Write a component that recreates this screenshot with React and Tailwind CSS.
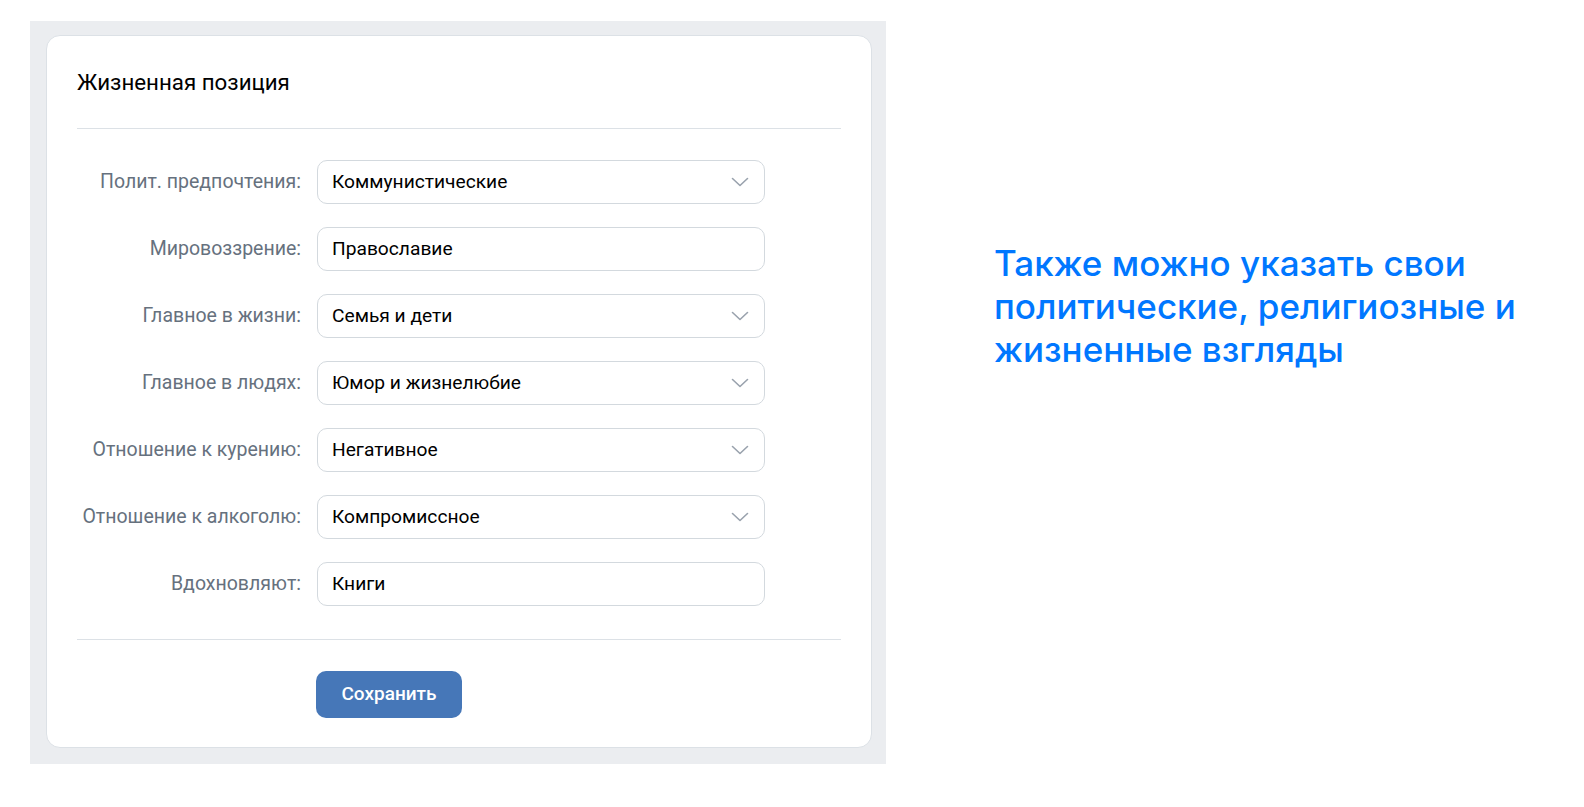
import React from 'react';

const rows = [
  { label: 'Полит. предпочтения:', value: 'Коммунистические', select: true },
  { label: 'Мировоззрение:', value: 'Православие', select: false },
  { label: 'Главное в жизни:', value: 'Семья и дети', select: true },
  { label: 'Главное в людях:', value: 'Юмор и жизнелюбие', select: true },
  { label: 'Отношение к курению:', value: 'Негативное', select: true },
  { label: 'Отношение к алкоголю:', value: 'Компромиссное', select: true },
  { label: 'Вдохновляют:', value: 'Книги', select: false },
];

const Chevron = () => (
  <svg width="18" height="10" viewBox="0 0 18 10" fill="none" className="shrink-0">
    <path d="M1.5 1.5 9 8.5l7.5-7" stroke="#99a2ad" strokeWidth="1.6" strokeLinecap="round" strokeLinejoin="round" />
  </svg>
);

const FieldRow = ({ label, value, select }) => (
  <div className="flex items-center">
    <div className="w-[240px] pr-4 text-right text-[19.5px] text-[#66717e] whitespace-nowrap">{label}</div>
    <div className="w-[448px] h-[44px] rounded-[10px] border border-[#d3d9de] bg-white flex items-center justify-between pl-[14px] pr-[15px]">
      <span className="text-[19.2px] text-[#000]">{value}</span>
      {select && <Chevron />}
    </div>
  </div>
);

export default function App() {
  return (
    <div className="min-h-screen bg-white flex items-start" style={{ fontFamily: 'Roboto, "Liberation Sans", sans-serif' }}>
      {/* серый фон вокруг карточки */}
      <div className="ml-[30px] mt-[21px] w-[856px] h-[743px] bg-[#ebedf0] pl-4 pt-[14px]">
        <div className="w-[826px] h-[713px] bg-white rounded-[14px] border border-[#dce1e6] px-[30px]">
          <div className="h-[93px] flex items-center border-b border-[#dce1e6]">
            <h2 className="text-[22.3px] text-[#000] pt-[1px]">Жизненная позиция</h2>
          </div>

          <div className="pt-[31px] pb-[33px] flex flex-col gap-[23px] border-b border-[#dce1e6]">
            {rows.map((r) => (
              <FieldRow key={r.label} {...r} />
            ))}
          </div>

          <div className="pt-[31px] pl-[239px]">
            <button className="w-[146px] h-[47px] rounded-[10px] bg-[#4677b8] text-white text-[19px] font-medium">
              Сохранить
            </button>
          </div>
        </div>
      </div>

      <p
        className="ml-[108px] mt-[242px] text-[35px] leading-[43px] font-medium text-[#0077ff]"
        style={{ fontFamily: 'Inter, Roboto, sans-serif' }}
      >
        Также можно указать свои
        <br />
        политические, религиозные и
        <br />
        жизненные взгляды
      </p>
    </div>
  );
}
